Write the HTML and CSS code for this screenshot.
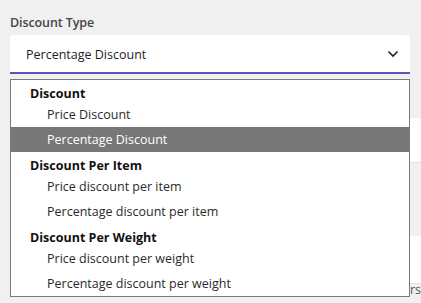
FILE: index.html
```html
<!DOCTYPE html>
<html lang="en">
<head>
  <meta charset="UTF-8" />
  <meta name="viewport" content="width=device-width, initial-scale=1.0" />
  <title>Discount Type</title>
  <link rel="stylesheet" href="styles.css">
</head>

<body>
  <div class="field">
    <label class="field-label" for="discountType">Discount Type</label>
    <div class="select" id="discountType">
      <span class="select-value">Percentage Discount</span>
      <svg class="chevron" width="12" height="8" viewBox="0 0 12 8">
        <path d="M1.5 1.5 L6 6 L10.5 1.5" fill="none" stroke="#222" stroke-width="1.6" />
      </svg>
    </div>

    <div class="listbox">
      <div class="group">Discount</div>
      <div class="option">Price Discount</div>
      <div class="option selected">Percentage Discount</div>
      <div class="group">Discount Per Item</div>
      <div class="option">Price discount per item</div>
      <div class="option">Percentage discount per item</div>
      <div class="group">Discount Per Weight</div>
      <div class="option">Price discount per weight</div>
      <div class="option">Percentage discount per weight</div>
    </div>
  </div>

  <!-- rest of the form, mostly hidden behind the open list -->
  <div class="behind">
    <div class="bg-input first"></div>
    <div class="bg-input second"></div>
    <p class="bg-text">Apply the discount only on weight based shipping orders</p>
  </div>
</body>
</html>
```

FILE: styles.css
```css
body {
  margin: 0;
  background: #f0f0f0;
  font-family: "Open Sans", "Noto Sans", sans-serif;
  font-size: 12.5px;
  color: #222;
  overflow: hidden;
  width: 421px;
  height: 303px;
}

.field {
  position: relative;
  padding: 14px 11px 0 10px;
}

.field-label {
  display: block;
  font-size: 12.5px;
  font-weight: 600;
  letter-spacing: -0.1px;
  color: #454545;
  line-height: 18px;
  margin-bottom: 3px;
}

.select {
  display: flex;
  align-items: center;
  justify-content: space-between;
  height: 37px;
  padding: 0 11px 0 16px;
  background: #fff;
  border-radius: 3px 3px 0 0;
  border-bottom: 2px solid #5a50bf;
}

.select-value {
  color: #1e1e1e;
  padding-top: 1px;
}

.chevron {
  display: block;
}

.listbox {
  position: absolute;
  top: 79px;
  left: 10px;
  width: 398px;
  background: #fff;
  border: 1px solid #7a7a7a;
  z-index: 2;
}

.group {
  height: 22px;
  line-height: 27px;
  padding-left: 19px;
  font-weight: 700;
  color: #111;
}

.option {
  height: 25px;
  line-height: 25px;
  padding-left: 36px;
  color: #2a2a2a;
}

.option.selected {
  background: #777;
  color: #fff;
}

.behind {
  padding-top: 44px;
}

.bg-input {
  width: 440px;
  margin-left: 10px;
  background: #fff;
  border-bottom: 1px solid #e2e2e2;
}

.bg-input.first {
  height: 44px;
}

.bg-input.second {
  height: 47px;
  margin-top: 73px;
}

.bg-text {
  margin: -3px 0 0;
  width: 421px;
  text-align: right;
  white-space: nowrap;
  color: #555;
}
```
